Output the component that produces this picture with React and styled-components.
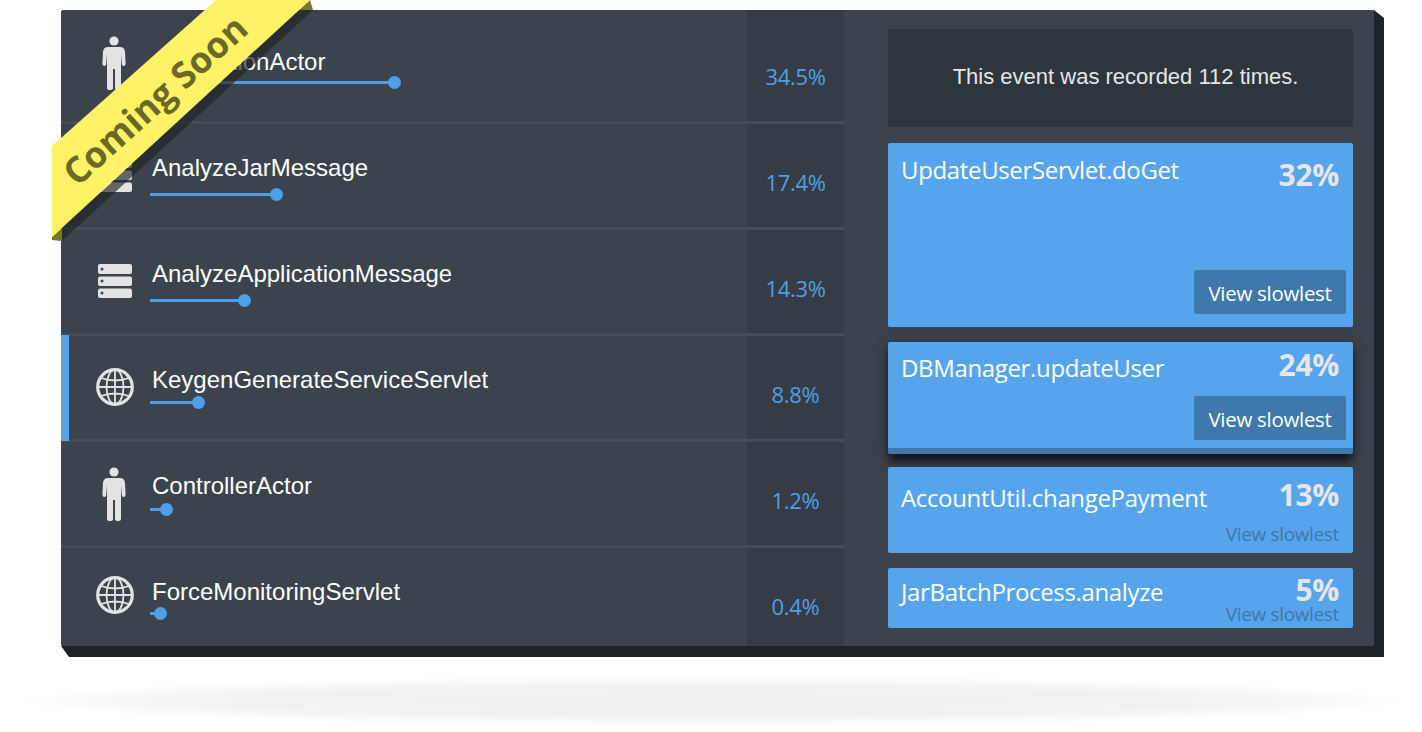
import React from "react";
import styled, { createGlobalStyle } from "styled-components";

const Global = createGlobalStyle`
  html, body { margin: 0; padding: 0; background: #fff; }
  body { font-family: "Liberation Sans", Arial, sans-serif; overflow: hidden; }
`;
const Page = styled.div`
  position: relative;
  width: 1422px;
  height: 732px;
  padding: 10px 48px 0 61px;
  box-sizing: border-box;
  overflow: hidden;
`;
const GroundShadow = styled.div`
  position: absolute;
  left: 14px;
  top: 678px;
  width: 1396px;
  height: 46px;
  background: radial-gradient(ellipse 50% 50% at 50% 50%, rgba(0,0,0,.07) 0%, rgba(0,0,0,.055) 70%, rgba(0,0,0,.025) 90%, rgba(0,0,0,0) 100%);
  filter: blur(3px);
`;
const Extrusion = styled.div`
  position: absolute;
  left: 61px;
  top: 10px;
  width: 1323px;
  height: 647px;
  background: #1e2327;
  clip-path: polygon(1313px 0, 1323px 8px, 1323px 647px, 8px 647px, 0 636px);
`;
const Panel = styled.div`
  position: relative;
  display: grid;
  grid-template-columns: 783px 1fr;
  width: 1313px;
  height: 636px;
  background: #3c434d;
  border-radius: 2px;
`;
const List = styled.div`
  display: flex;
  flex-direction: column;
  height: 636px;
  overflow: hidden;
`;
const Row = styled.div`
  position: relative;
  display: grid;
  grid-template-columns: 1fr 97px;
  flex: ${p => (p.$last ? "1 1 0" : `0 0 ${p.$first ? 114 : 106}px`)};
  box-sizing: border-box;
  border-bottom: ${p => (p.$last ? "none" : "3px solid #464d57")};
  ${p => p.$active && `
    &::before {
      content: "";
      position: absolute;
      left: 0;
      top: -1px;
      bottom: -2px;
      width: 8px;
      background: #56a5ec;
    }
  `}
`;
const Main = styled.div`
  display: grid;
  grid-template-columns: 89px 1fr;
  padding-top: ${p => (p.$first ? 8 : 0)}px;
`;
const IconSlot = styled.div`
  display: flex;
  justify-content: flex-start;
  padding-top: ${p => p.$top}px;
  padding-left: ${p => p.$left}px;
  box-sizing: border-box;
`;
const Info = styled.div`
  display: flex;
  flex-direction: column;
  align-items: flex-start;
  padding-top: 30px;
`;
const Name = styled.div`
  color: #fff;
  font-size: 24px;
  line-height: 27px;
  margin-left: 2px;
  white-space: nowrap;
`;
const Track = styled.div`
  position: relative;
  height: 3px;
  margin-top: ${p => p.$gap}px;
  background: #4f9fe8;
`;
const Knob = styled.span`
  position: absolute;
  right: -6.5px;
  top: -5px;
  width: 13px;
  height: 13px;
  border-radius: 50%;
  background: #4f9fe8;
`;
const Stat = styled.div`
  position: relative;
  display: flex;
  justify-content: center;
  align-items: flex-start;
  padding-top: ${p => (p.$first ? 53 : 45)}px;
  background: rgba(0,0,0,.1);
  color: #509fe6;
  font-family: "Open Sans", sans-serif;
  font-size: 22px;
  line-height: 27px;
  letter-spacing: -.3px;
`;
const Pointer = styled.span`
  position: absolute;
  left: 97px;
  top: 42px;
  width: 0;
  height: 0;
  border-style: solid;
  border-width: 14px 0 14px 18px;
  border-color: transparent transparent transparent #363c45;
`;
const Side = styled.div`
  display: flex;
  flex-direction: column;
  padding: 19px 21px 0 44px;
`;
const Notice = styled.div`
  display: flex;
  align-items: center;
  justify-content: center;
  height: 96px;
  padding: 0 0 2px 10px;
  margin-bottom: 16px;
  background: #2f353d;
  border-radius: 2px;
  color: #e6e6e6;
  font-size: 22px;
`;
const Card = styled.div`
  position: relative;
  display: flex;
  flex-direction: column;
  box-sizing: border-box;
  height: ${p => p.$h}px;
  margin-bottom: ${p => p.$mb}px;
  background: #56a5ec;
  border-radius: 2px;
  ${p => p.$raised && `
    border-bottom: 6px solid #3f78aa;
    box-shadow: 0 9px 10px -1px rgba(0,0,0,.65), 0 0 12px rgba(0,0,0,.25);
  `}
`;
const CardHead = styled.div`
  display: flex;
  justify-content: space-between;
  align-items: flex-start;
  padding: ${p => p.$pt}px 14px 0 13px;
`;
const Title = styled.div`
  color: #fff;
  font-family: "Open Sans", sans-serif;
  font-size: 24px;
  line-height: 28px;
  letter-spacing: -.35px;
  margin-top: ${p => p.$mt}px;
`;
const Percent = styled.div`
  color: #e6e6e6;
  font-family: "Open Sans", sans-serif;
  font-weight: 700;
  font-size: 30px;
  line-height: 32px;
  letter-spacing: -.3px;
`;
const SlowButton = styled.div`
  align-self: flex-end;
  display: flex;
  align-items: center;
  justify-content: center;
  box-sizing: border-box;
  width: 152px;
  height: 44px;
  padding-top: 2px;
  margin: auto 7px ${p => p.$mb}px 0;
  background: #3f78aa;
  border-radius: 2px;
  color: #fff;
  font-family: "Open Sans", sans-serif;
  font-size: 20.5px;
  letter-spacing: -.3px;
`;
const SlowLink = styled.div`
  position: absolute;
  right: 14px;
  bottom: ${p => p.$b}px;
  color: #3f78aa;
  font-family: "Open Sans", sans-serif;
  font-size: 19px;
  line-height: 20px;
  letter-spacing: -.35px;
`;
const Ribbon = styled.div`
  position: absolute;
  left: 52px;
  top: 0;
  width: 262px;
  height: 241px;
`;
const RibbonArt = styled.svg`
  display: block;
`;
const RibbonText = styled.span`
  position: absolute;
  left: 103px;
  top: 100px;
  transform: translate(-50%, -50%) rotate(-42deg);
  color: #6b6828;
  font-family: "Open Sans", sans-serif;
  font-weight: 700;
  font-size: 36px;
  line-height: 44px;
  white-space: nowrap;
`;

const Person = () => (
  <svg width="24" height="54" viewBox="0 0 24 54" fill="#e3e3e3">
    <circle cx="12" cy="5" r="4.6" />
    <path d="M6 11 H18 Q22.5 11 23 16 L23.6 27 Q23.6 30 21.6 30 Q20 30 19.8 28 L19 18 V52 Q19 54 16.5 54 Q13 54 13 52 V33 H11 V52 Q11 54 8 54 Q5 54 5 52 V18 L4.2 28 Q4 30 2.4 30 Q.4 30 .4 27 L1 16 Q1.5 11 6 11 Z" />
  </svg>
);
const Server = () => (
  <svg width="34" height="34" viewBox="0 0 34 34">
    <g fill="#e3e3e3">
      <rect x="0" y="0" width="34" height="10" rx="2" />
      <rect x="0" y="12.5" width="34" height="9.5" rx="2" />
      <rect x="0" y="24.5" width="34" height="9.5" rx="2" />
    </g>
    <g fill="#3c434d">
      <circle cx="4" cy="5" r="1.5" />
      <circle cx="4" cy="17" r="1.5" />
      <circle cx="4" cy="29" r="1.5" />
    </g>
  </svg>
);
const Globe = () => (
  <svg width="38" height="38" viewBox="0 0 38 38" fill="none" stroke="#e3e3e3">
    <circle cx="19" cy="19" r="17.3" strokeWidth="3.2" />
    <g strokeWidth="1.8">
      <ellipse cx="19" cy="19" rx="8.5" ry="17.3" />
      <path d="M19 2 V36 M2 19 H36 M5 10 Q19 15 33 10 M5 28 Q19 23 33 28" />
    </g>
  </svg>
);

const rows = [
  { name: "ApplicationActor", pct: "34.5%", bar: 244, gap: 6, icon: "person", iconTop: 18, first: true },
  { name: "AnalyzeJarMessage", pct: "17.4%", bar: 126, gap: 12, icon: "server", iconTop: 34 },
  { name: "AnalyzeApplicationMessage", pct: "14.3%", bar: 94, gap: 12, icon: "server", iconTop: 34 },
  { name: "KeygenGenerateServiceServlet", pct: "8.8%", bar: 48, gap: 8, icon: "globe", iconTop: 32, active: true },
  { name: "ControllerActor", pct: "1.2%", bar: 16, gap: 9, icon: "person", iconTop: 25 },
  { name: "ForceMonitoringServlet", pct: "0.4%", bar: 10, gap: 7, icon: "globe", iconTop: 28, last: true },
];
const icons = { person: Person, server: Server, globe: Globe };
const iconLeft = { person: 41, server: 37, globe: 35 };

export default function App() {
  return (
    <Page>
      <Global />
      <GroundShadow />
      <Extrusion />
      <Panel>
        <List>
          {rows.map(r => {
            const Icon = icons[r.icon];
            return (
              <Row key={r.name} $first={r.first} $last={r.last} $active={r.active}>
                <Main $first={r.first}>
                  <IconSlot $top={r.iconTop} $left={iconLeft[r.icon]}>
                    <Icon />
                  </IconSlot>
                  <Info>
                    <Name>{r.name}</Name>
                    <Track $gap={r.gap} style={{ width: r.bar }}><Knob /></Track>
                  </Info>
                </Main>
                <Stat $first={r.first}>
                  {r.pct}
                  {r.active && <Pointer />}
                </Stat>
              </Row>
            );
          })}
        </List>
        <Side>
          <Notice>This event was recorded 112 times.</Notice>
          <Card $h={184} $mb={15}>
            <CardHead $pt={16}><Title $mt={-3}>UpdateUserServlet.doGet</Title><Percent>32%</Percent></CardHead>
            <SlowButton $mb={13}>View slowlest</SlowButton>
          </Card>
          <Card $h={112} $mb={13} $raised>
            <CardHead $pt={7}><Title $mt={5}>DBManager.updateUser</Title><Percent>24%</Percent></CardHead>
            <SlowButton $mb={8}>View slowlest</SlowButton>
          </Card>
          <Card $h={86} $mb={15}>
            <CardHead $pt={12}><Title $mt={5}>AccountUtil.changePayment</Title><Percent>13%</Percent></CardHead>
            <SlowLink $b={9}>View slowlest</SlowLink>
          </Card>
          <Card $h={60} $mb={0}>
            <CardHead $pt={6}><Title $mt={4}>JarBatchProcess.analyze</Title><Percent>5%</Percent></CardHead>
            <SlowLink $b={4}>View slowlest</SlowLink>
          </Card>
        </Side>
      </Panel>
      <Ribbon>
        <RibbonArt width="262" height="241" viewBox="0 0 262 241">
          <polygon points="10,228 247,10 261,10 10,241" fill="rgba(30,35,40,.65)" />
          <polygon points="0,237 10,228 10,241 0,240" fill="#77742c" />
          <polygon points="258,0 261,10 247,10" fill="#77742c" />
          <polygon points="0,146 164,0 258,0 0,237" fill="#fff266" />
        </RibbonArt>
        <RibbonText>Coming Soon</RibbonText>
      </Ribbon>
    </Page>
  );
}
